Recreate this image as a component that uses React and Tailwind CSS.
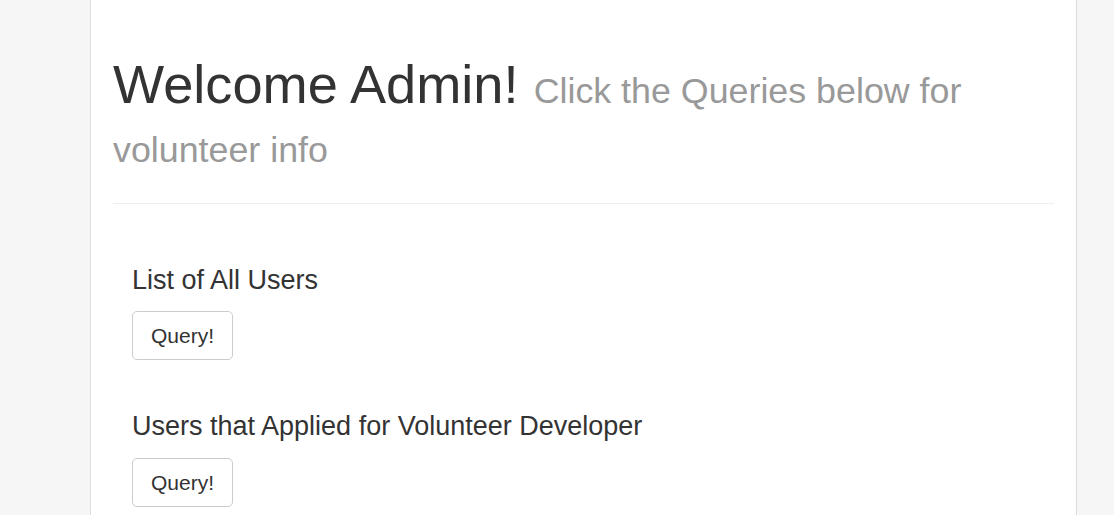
import React from "react";

const queries = [
  "List of All Users",
  "Users that Applied for Volunteer Developer",
];

const QuerySection = ({ title, first }) => {
  return (
    <div className={`${first ? "mt-[62px]" : "mt-[52px]"} pl-[19px]`}>
      <h3 className="text-[27px] leading-[1.1] font-normal text-[#333]">
        {title}
      </h3>
      <button className="mt-[16px] px-[18px] py-[10px] text-[21px] leading-[27px] text-[#333] bg-white border border-[#ccc] rounded-[5px]">
        Query!
      </button>
    </div>
  );
};

export default function App() {
  return (
    <div className="min-h-screen bg-[#f6f6f6] font-['Liberation_Sans',Arial,sans-serif] text-[#333]">
      <div className="ml-[90px] w-[987px] min-h-screen bg-white border-x border-[#ddd] px-[22px] pb-10">
        {/* Page header */}
        <div className="pt-[55px] pb-[29px] border-b border-[#eee]">
          <h1 className="text-[54.2px] leading-[1.095] font-normal">
            Welcome Admin!{" "}
            <small className="text-[35.8px] text-[#999]">
              Click the Queries below for volunteer info
            </small>
          </h1>
        </div>

        {queries.map((q, i) => (
          <QuerySection key={q} title={q} first={i === 0} />
        ))}
      </div>
    </div>
  );
}
